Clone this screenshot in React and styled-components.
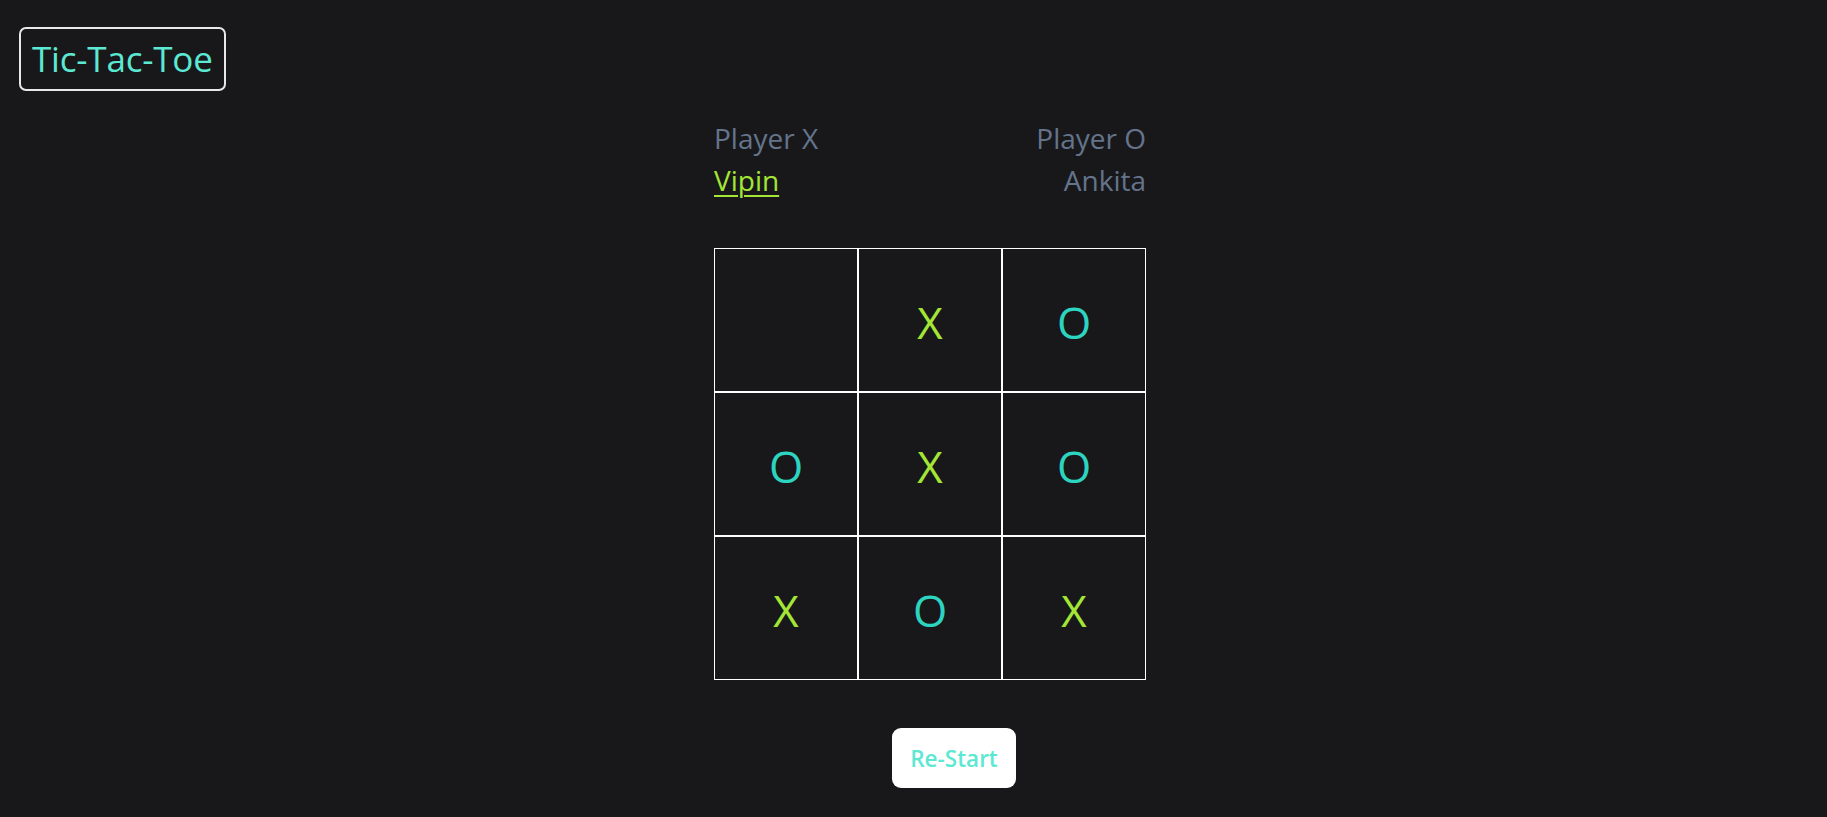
import React from "react";
import styled, { createGlobalStyle } from "styled-components";

const GlobalStyle = createGlobalStyle`
  html, body {
    margin: 0;
    padding: 0;
    background: #18181b;
    font-family: "Open Sans", "Noto Sans", sans-serif;
  }
  body { min-height: 100vh; }
`;

const Page = styled.div`
  min-height: 817px;
  background: #18181b;
  box-sizing: border-box;
`;

const Header = styled.header`
  padding: 27px 19px 0;
`;

const Title = styled.h1`
  display: inline-block;
  margin: 0;
  padding: 10px 11px;
  border: 2px solid #e8e8e8;
  border-radius: 7px;
  color: #5ce8d2;
  font-size: 35px;
  line-height: 40px;
  font-weight: 400;
  letter-spacing: -0.2px;
`;

const Main = styled.main`
  display: flex;
  flex-direction: column;
  align-items: center;
  margin-top: 26px;
  padding-left: 33px;
`;

const Players = styled.div`
  width: 432px;
  display: flex;
  justify-content: space-between;
  font-size: 28px;
  line-height: 42px;
`;

const PlayerCol = styled.div`
  display: flex;
  flex-direction: column;
  align-items: ${(p) => (p.$right ? "flex-end" : "flex-start")};
`;

const Label = styled.span`
  color: #64748b;
`;

const Name = styled.span`
  color: ${(p) => (p.$active ? "#a3e635" : "#64748b")};
  text-decoration: ${(p) => (p.$active ? "underline" : "none")};
  text-underline-offset: 4px;
  text-decoration-thickness: 2px;
`;

const Board = styled.div`
  margin-top: 47px;
  display: grid;
  grid-template-columns: repeat(3, 144px);
  grid-template-rows: repeat(3, 144px);
`;

const Cell = styled.button`
  box-sizing: border-box;
  width: 144px;
  height: 144px;
  border: 1px solid #ffffff;
  background: #18181b;
  padding: 4px 0 0;
  display: flex;
  align-items: center;
  justify-content: center;
  font-family: "Open Sans", "Noto Sans", sans-serif;
  font-size: 44px;
  line-height: 1;
  color: ${(p) => (p.$mark === "X" ? "#a3e635" : "#2dd4bf")};
  cursor: pointer;
`;

const RestartButton = styled.button`
  margin-top: 48px;
  margin-left: 48px;
  height: 60px;
  padding: 0 18px;
  border: none;
  border-radius: 9px;
  background: #ffffff;
  color: #5ce8d2;
  font-family: "Open Sans", "Noto Sans", sans-serif;
  font-size: 22.5px;
  font-weight: 600;
  cursor: pointer;
`;

const board = ["", "X", "O", "O", "X", "O", "X", "O", "X"];

export default function App() {
  return (
    <Page>
      <GlobalStyle />
      <Header>
        <Title>Tic-Tac-Toe</Title>
      </Header>
      <Main>
        <Players>
          <PlayerCol>
            <Label>Player X</Label>
            <Name $active>Vipin</Name>
          </PlayerCol>
          <PlayerCol $right>
            <Label>Player O</Label>
            <Name>Ankita</Name>
          </PlayerCol>
        </Players>
        <Board>
          {board.map((m, i) => (
            <Cell key={i} $mark={m}>
              {m}
            </Cell>
          ))}
        </Board>
        <RestartButton>Re-Start</RestartButton>
      </Main>
    </Page>
  );
}
